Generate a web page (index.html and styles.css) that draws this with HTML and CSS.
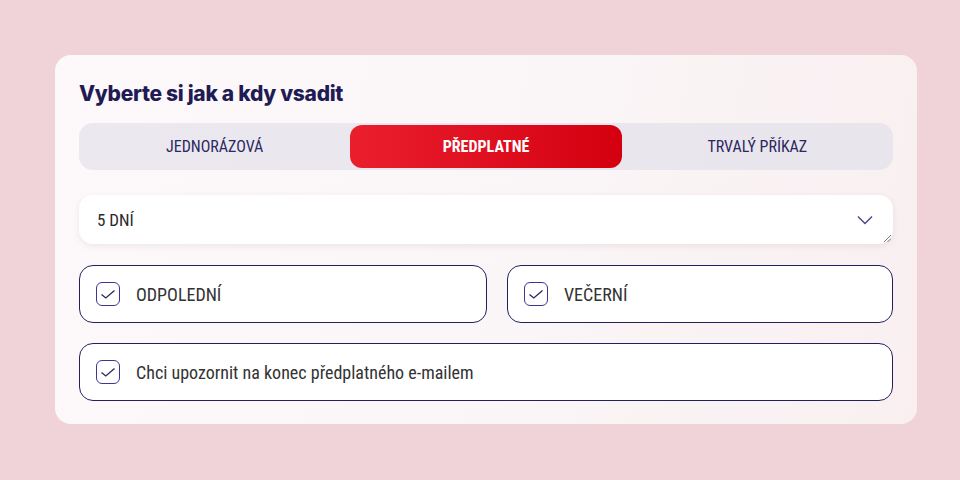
FILE: index.html
```html
<!DOCTYPE html>
<html lang="cs">
<head>
  <meta charset="UTF-8" />
  <title>Předplatné</title>
  <link rel="stylesheet" href="styles.css">
</head>
<body>
  <div class="card">
    <h2 class="card-title">Vyberte si jak a kdy vsadit</h2>

    <div class="tabs">
      <button class="tab">JEDNORÁZOVÁ</button>
      <button class="tab active">PŘEDPLATNÉ</button>
      <button class="tab">TRVALÝ PŘÍKAZ</button>
    </div>

    <div class="select">
      <span>5 DNÍ</span>
      <svg class="chevron" width="16" height="10" viewBox="0 0 16 10">
        <path d="M1 1.5 L8 8.5 L15 1.5" fill="none" stroke="#4a4680" stroke-width="1.4"/>
      </svg>
      <svg class="grip" width="8" height="8" viewBox="0 0 8 8">
        <path d="M1 8 L8 1 M4.5 8 L8 4.5" stroke="#777" stroke-width="1"/>
      </svg>
    </div>

    <div class="row">
      <label class="check">
        <span class="box"><svg width="16" height="16" viewBox="0 0 16 16"><path d="M1.5 8.5 L5.8 12 L14.5 4.5" fill="none" stroke="#2a2660" stroke-width="1.3"/></svg></span>
        ODPOLEDNÍ
      </label>
      <label class="check">
        <span class="box"><svg width="16" height="16" viewBox="0 0 16 16"><path d="M1.5 8.5 L5.8 12 L14.5 4.5" fill="none" stroke="#2a2660" stroke-width="1.3"/></svg></span>
        VEČERNÍ
      </label>
    </div>

    <label class="check">
      <span class="box"><svg width="16" height="16" viewBox="0 0 16 16"><path d="M1.5 8.5 L5.8 12 L14.5 4.5" fill="none" stroke="#2a2660" stroke-width="1.3"/></svg></span>
      Chci upozornit na konec předplatného e-mailem
    </label>
  </div>
</body>
</html>
```

FILE: styles.css
```css
body {
  margin: 0;
  padding: 55px 43px 0 55px;
  background-color: #f0d3d8;
  font-family: "Roboto Condensed", "Liberation Sans Narrow", Roboto, sans-serif;
  font-stretch: condensed;
}

.card {
  background: linear-gradient(100deg, #fdf9fa 0%, #faf5f6 60%, #f9eff1 100%);
  border-radius: 16px;
  padding: 24px 24px 23px 24px;
  display: flex;
  flex-direction: column;
}

.card-title {
  margin: 0 0 14px 0;
  font-family: Inter, sans-serif;
  font-stretch: normal;
  font-weight: 800;
  font-size: 21px;
  letter-spacing: -0.3px;
  line-height: 30px;
  color: #1f1b55;
}

.tabs {
  display: grid;
  grid-template-columns: 1fr 1fr 1fr;
  background: linear-gradient(90deg, #ebe9ef, #e8e5ec);
  border-radius: 14px;
  padding: 2px 0;
  margin-bottom: 25px;
}

.tab {
  border: none;
  background: transparent;
  height: 43px;
  font-family: inherit;
  font-stretch: condensed;
  font-size: 16px;
  color: #2c2862;
  cursor: pointer;
}

.tab.active {
  background: linear-gradient(90deg, #ea1f2e, #d40010);
  color: #fff;
  font-weight: 700;
  border-radius: 12px;
}

.select {
  position: relative;
  display: flex;
  align-items: center;
  justify-content: space-between;
  height: 49px;
  padding: 0 20px 0 18px;
  background: #fff;
  border-radius: 14px;
  box-shadow: 0 2px 6px rgba(120, 90, 100, 0.12);
  font-size: 17px;
  color: #2b2b2b;
  margin-bottom: 21px;
}

.select .grip {
  position: absolute;
  right: 2px;
  bottom: 2px;
}

.row {
  display: grid;
  grid-template-columns: 408fr 386fr;
  gap: 20px;
  margin-bottom: 20px;
}

.check {
  display: flex;
  align-items: center;
  gap: 16px;
  height: 56px;
  padding: 0 16px;
  background: #fff;
  border: 1px solid #24205e;
  border-radius: 14px;
  font-size: 18px;
  color: #333;
}

.box {
  width: 22px;
  height: 22px;
  border: 1px solid #3b3893;
  border-radius: 6px;
  display: flex;
  align-items: center;
  justify-content: center;
}
```
